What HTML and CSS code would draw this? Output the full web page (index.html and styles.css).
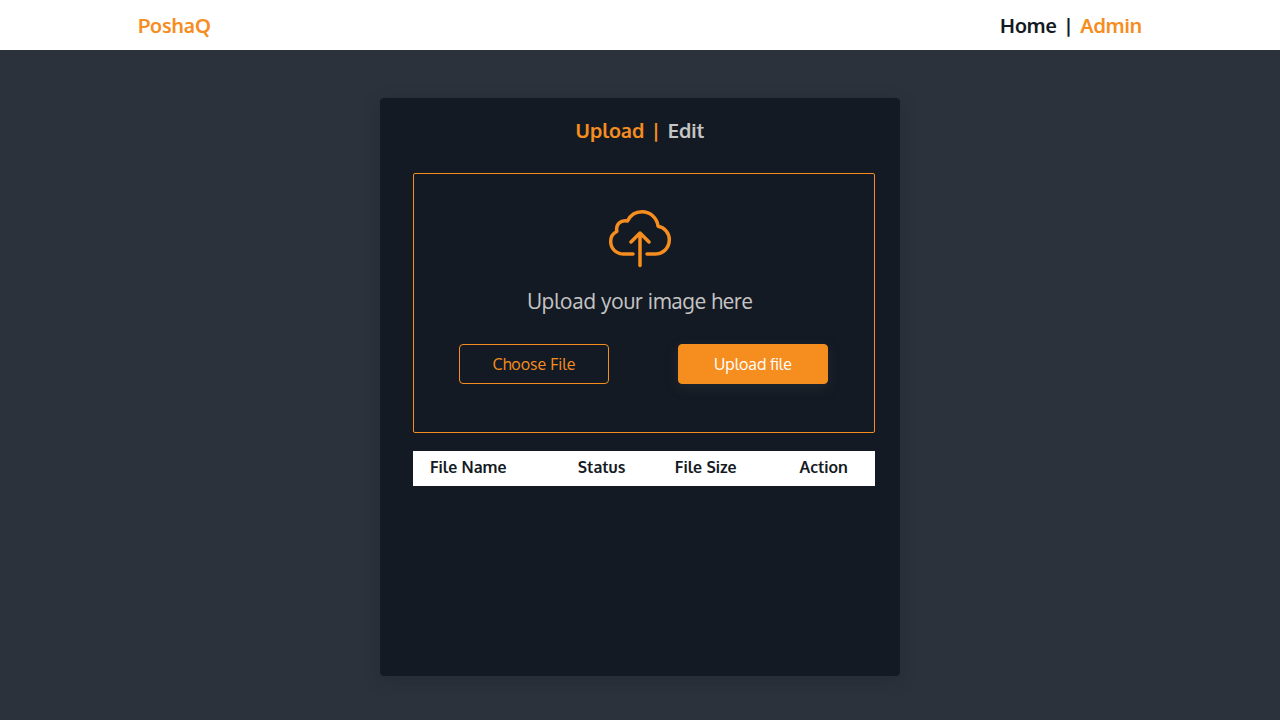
FILE: index.html
```html
<!DOCTYPE html>
<html lang="en">
<head>
<meta charset="utf-8">
<meta name="viewport" content="width=device-width, initial-scale=1">
<title>PoshaQ Admin</title>
<link rel="stylesheet" href="styles.css">
</head>
<body>
<header class="topbar">
  <a class="brand" href="#">PoshaQ</a>
  <nav class="nav"><a class="nav-link" href="#">Home</a><span>|</span><a class="nav-link active" href="#">Admin</a></nav>
</header>
<main class="page">
  <section class="card">
    <nav class="tabs"><a class="tab active" href="#">Upload</a><span class="active">|</span><a class="tab" href="#">Edit</a></nav>
    <form class="dropzone">
      <svg class="cloud" viewBox="0 0 64 60" aria-hidden="true">
        <path d="M25 46H15.500C8 46 2.700 40.500 2.700 33.500C2.700 29 5 25.300 8.800 23.500C7.600 16.500 12.500 11.500 19.500 13C22.500 7 27.700 3.800 34 3.800C42.500 3.800 49.200 10 50 18.200C56.500 19.300 61.300 25 61.300 31.500C61.300 39.500 55.500 46 47.500 46H39"/>
        <path d="M32 57.500V25.500M23 34L32 25L41 34"/>
      </svg>
      <p class="prompt">Upload your image here</p>
      <div class="actions">
        <button class="btn btn-outline" type="button">Choose File</button>
        <button class="btn btn-solid" type="button">Upload file</button>
      </div>
    </form>
    <table class="files">
      <thead>
        <tr>
          <th class="col-name" scope="col">File Name</th>
          <th class="col-status" scope="col">Status</th>
          <th class="col-size" scope="col">File Size</th>
          <th class="col-action" scope="col">Action</th>
        </tr>
      </thead>
    </table>
  </section>
</main>
</body>
</html>
```
FILE: styles.css
```css
* {
  box-sizing: border-box;
}

body {
  margin: 0;
  min-height: 100vh;
  background: #2c323c;
  color: #c4c4c4;
  font-family: Oxygen, "Noto Sans", sans-serif;
}

a {
  color: inherit;
  text-decoration: none;
}

.topbar {
  display: flex;
  align-items: center;
  justify-content: space-between;
  height: 50px;
  padding: 0 138px;
  background: #fff;
  color: #141a23;
  font-size: 20px;
  font-weight: 600;
}

.nav,
.tabs {
  display: flex;
  gap: 8px;
}

.brand,
.active {
  color: #f68d1f;
}

.page {
  padding: 48px 16px 44px;
}

.card {
  max-width: 520px;
  min-height: 578px;
  margin: 0 auto;
  padding: 18px 25px 24px 33px;
  border-radius: 4px;
  background: #141a23;
  box-shadow: 0 4px 16px rgba(20, 27, 36, 0.25);
}

.tabs {
  justify-content: center;
  margin: 0 8px 29px 0;
  font-size: 20px;
  font-weight: 700;
  line-height: 28px;
}

.dropzone {
  padding: 34px 46px 48px 45px;
  border: 1px solid #f68d1f;
  border-radius: 2px;
}

.cloud {
  display: block;
  width: 64px;
  height: 60px;
  margin: 0 auto;
  transform: translateX(-4px);
  fill: none;
  stroke: #f68d1f;
  stroke-width: 3.500;
  stroke-linecap: round;
  stroke-linejoin: round;
}

.prompt {
  margin: 19px 7px 29px 0;
  font-size: 21px;
  font-weight: 400;
  line-height: 28px;
  text-align: center;
}

.actions {
  display: flex;
  justify-content: space-between;
}

.btn {
  width: 150px;
  height: 40px;
  padding: 0;
  border: 1px solid #f68d1f;
  border-radius: 4px;
  font-family: inherit;
  font-size: 16px;
}

.btn-outline {
  background: transparent;
  color: #f68d1f;
}

.btn-solid {
  background: #f68d1f;
  color: #fff;
  box-shadow: 0 4px 12px rgba(54, 60, 66, 0.4);
}

.files {
  width: 100%;
  margin-top: 18px;
  border-collapse: collapse;
  table-layout: fixed;
  background: #fff;
  color: #141a23;
  font-size: 16px;
  line-height: 24px;
}

.files th {
  padding: 4px 0 7px 17px;
  font-weight: 600;
  text-align: left;
  white-space: nowrap;
}

.col-name {
  width: 32%;
}

.col-status {
  width: 21%;
}

.col-size {
  width: 27%;
}

.col-action {
  width: 20%;
}
```
